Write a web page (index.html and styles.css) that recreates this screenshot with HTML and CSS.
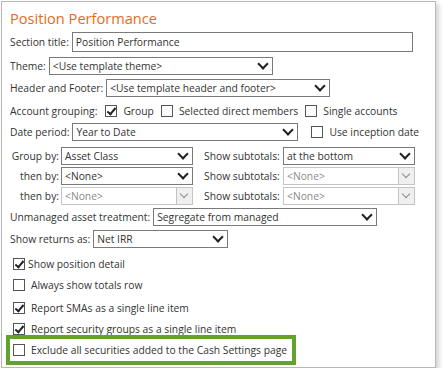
FILE: index.html
```html
<!DOCTYPE html>
<html lang="en">

<head>
    <meta charset="UTF-8">
    <title>Position Performance</title>
    <link rel="stylesheet" href="styles.css">
</head>

<body>
    <div class="panel">
        <h3 class="title">Position Performance</h3>

        <div class="row row-title">
            <label>Section title:</label>
            <div class="textbox w-title">Position Performance</div>
        </div>

        <div class="row row-theme">
            <label>Theme:</label>
            <div class="select w-theme"><span>&lt;Use template theme&gt;</span><i class="chev"></i></div>
        </div>

        <div class="row row-header">
            <label>Header and Footer:</label>
            <div class="select w-header"><span>&lt;Use template header and footer&gt;</span><i class="chev"></i></div>
        </div>

        <div class="row row-grouping">
            <label>Account grouping:</label>
            <span class="check on"></span><span class="opt">Group</span>
            <span class="check"></span><span class="opt">Selected direct members</span>
            <span class="check"></span><span class="opt">Single accounts</span>
        </div>

        <div class="row row-date">
            <label>Date period:</label>
            <div class="select w-date"><span>Year to Date</span><i class="chev"></i></div>
            <span class="check inception"></span><span class="opt">Use inception date</span>
        </div>

        <div class="grid-group">
            <label class="glabel">Group by:</label>
            <div class="select w-group"><span>Asset Class</span><i class="chev"></i></div>
            <label class="slabel">Show subtotals:</label>
            <div class="select w-sub"><span>at the bottom</span><i class="chev"></i></div>

            <label class="glabel">then by:</label>
            <div class="select w-group"><span>&lt;None&gt;</span><i class="chev"></i></div>
            <label class="slabel">Show subtotals:</label>
            <div class="select w-sub disabled"><span>&lt;None&gt;</span><i class="chev"></i></div>

            <label class="glabel">then by:</label>
            <div class="select w-group disabled"><span>&lt;None&gt;</span><i class="chev"></i></div>
            <label class="slabel">Show subtotals:</label>
            <div class="select w-sub disabled"><span>&lt;None&gt;</span><i class="chev"></i></div>
        </div>

        <div class="row row-unmanaged">
            <label>Unmanaged asset treatment:</label>
            <div class="select w-unmanaged"><span>Segregate from managed</span><i class="chev"></i></div>
        </div>

        <div class="row row-returns">
            <label>Show returns as:</label>
            <div class="select w-returns"><span>Net IRR</span><i class="chev"></i></div>
        </div>

        <div class="checks">
            <div class="crow c1"><span class="check on bold"></span><span>Show position detail</span></div>
            <div class="crow c2"><span class="check"></span><span>Always show totals row</span></div>
            <div class="crow c3"><span class="check on"></span><span>Report SMAs as a single line item</span></div>
            <div class="crow c4"><span class="check on"></span><span>Report security groups as a single line item</span></div>
            <div class="highlight">
                <div class="crow"><span class="check"></span><span>Exclude all securities added to the Cash Settings page</span></div>
            </div>
        </div>
    </div>
</body>

</html>
```

FILE: styles.css
```css
body {
    margin: 0;
    padding: 0;
    background: white;
    font-family: "Open Sans", "Noto Sans", sans-serif;
    font-size: 10.3px;
    color: #333;
}

.panel {
    box-sizing: border-box;
    width: 435px;
    height: 367px;
    margin: 1px 0 0 1px;
    padding: 0 0 0 8px;
    border: 1px solid #b8b8b8;
    box-shadow: 3px 3px 5px rgba(0, 0, 0, 0.18);
    background: white;
}

.title {
    margin: 6px 0 0 0;
    font-size: 14.6px;
    font-weight: normal;
    color: #e36c1c;
    line-height: 20px;
}

.row {
    display: flex;
    align-items: center;
    white-space: nowrap;
}

label {
    margin-right: 3px;
    white-space: nowrap;
}

.textbox,
.select {
    box-sizing: border-box;
    border: 1px solid #7a7a7a;
    background: white;
    padding-left: 3px;
    display: flex;
    align-items: center;
    white-space: nowrap;
    flex: none;
}

.textbox {
    height: 20px;
}

.select {
    height: 18px;
    position: relative;
}

/* chevron of the drop-downs */
.chev {
    position: absolute;
    right: 5px;
    top: 2px;
    width: 6px;
    height: 6px;
    border-right: 2px solid #222;
    border-bottom: 2px solid #222;
    transform: rotate(45deg);
}

.select.disabled {
    border-color: #c4c4c4;
    color: #8a8a8a;
}

.select.disabled .chev {
    right: 0;
    top: 0;
    width: 15px;
    height: 16px;
    border: none;
    border-left: 1px solid #c4c4c4;
    background: #efefef;
    transform: none;
}

.select.disabled .chev::after {
    content: "";
    position: absolute;
    left: 4px;
    top: 3px;
    width: 5px;
    height: 5px;
    border-right: 1px solid #8a8a8a;
    border-bottom: 1px solid #8a8a8a;
    transform: rotate(45deg);
}

.w-title { width: 341px; }
.w-theme { width: 224px; }
.w-header { width: 224px; }
.w-date { width: 226px; }
.w-group { width: 132px; }
.w-sub { width: 132px; }
.w-unmanaged { width: 224px; }
.w-returns { width: 135px; }

.row-title { margin-top: 4px; }
.row-theme { margin-top: 5px; }
.row-header { margin-top: 4px; }
.row-grouping { margin-top: 5px; height: 18px; }
.row-date { margin-top: 3px; }
.row-unmanaged { margin-top: 3px; }
.row-returns { margin-top: 4px; }

.check {
    box-sizing: border-box;
    width: 12px;
    height: 12px;
    border: 1px solid #555;
    background: white;
    position: relative;
    flex: none;
}

.check.on::after {
    content: "";
    position: absolute;
    left: 3px;
    top: 0;
    width: 3px;
    height: 7px;
    border-right: 2px solid #222;
    border-bottom: 2px solid #222;
    transform: rotate(40deg);
}

.check.bold::after {
    border-width: 0 2.5px 2.5px 0;
}

.opt {
    margin: 0 7px 0 6px;
}

.row-grouping .check:first-of-type {
    margin-left: 5px;
}

.inception {
    margin-left: 13px;
}

.grid-group {
    display: grid;
    grid-template-columns: 51px 132px 90px 132px;
    row-gap: 2px;
    margin-top: 6px;
    align-items: center;
}

.glabel {
    justify-self: end;
    margin-right: 2px;
}

.slabel {
    margin-left: 11px;
    margin-right: 0;
}

.checks {
    display: flex;
    flex-direction: column;
}

.crow {
    display: flex;
    align-items: center;
    height: 12px;
    line-height: 12px;
    padding-left: 3px;
    white-space: nowrap;
}

.crow .check {
    margin-right: 6px;
}

.c1 { margin-top: 10px; }
.c1 .check { margin-right: 3px; }
.c2 { margin-top: 9px; }
.c3 { margin-top: 11px; }
.c4 { margin-top: 9px; }

.highlight {
    box-sizing: border-box;
    width: 290px;
    height: 30px;
    margin-left: -4px;
    padding-top: 5px;
    border: 4px solid #62a22d;
}
```
